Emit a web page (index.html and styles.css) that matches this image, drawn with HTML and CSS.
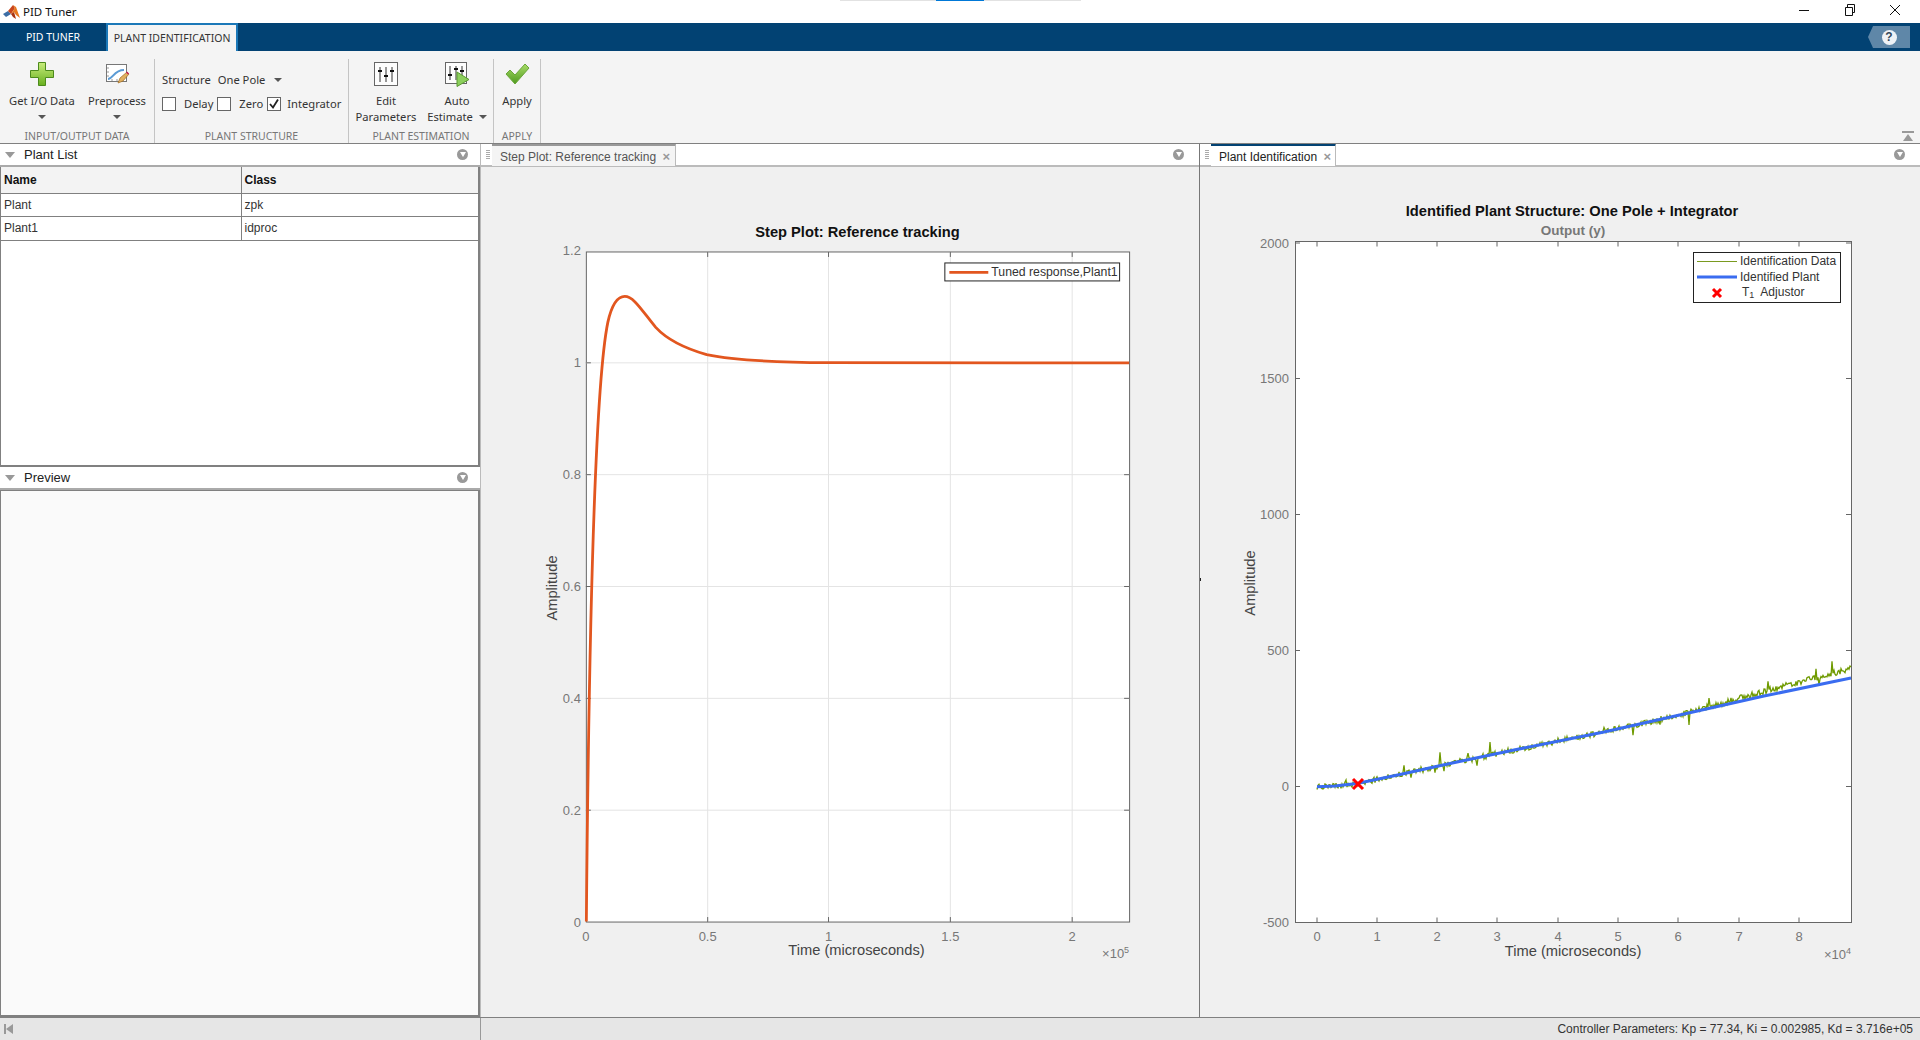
FILE: index.html
```html
<!DOCTYPE html>
<html lang="en">
<head>
    <meta charset="UTF-8">
    <title>PID Tuner</title>
    <link rel="stylesheet" href="styles.css">
</head>
<body>
<div class="app">
    <div class="load-strip"><span class="load-mark"></span></div>

    <div class="titlebar">
        <svg class="logo" width="18" height="16" viewBox="0 0 18 16">
            <polygon points="0,10 5,7 8,10 3,13" fill="#3c6ea5"/>
            <polygon points="5,7 10,1 12,4 8,10" fill="#c9461c"/>
            <polygon points="10,1 13,3 17,14 13,11 11,8 8,10 12,4" fill="#e8791f"/>
            <polygon points="8,10 11,8 13,15 10,13" fill="#a8320f"/>
        </svg>
        <span class="title-text">PID Tuner</span>
        <div class="win-controls">
            <span class="win-btn"><svg width="12" height="12" viewBox="0 0 12 12"><path d="M1 6.5h10" stroke="#111" fill="none"/></svg></span>
            <span class="win-btn"><svg width="12" height="12" viewBox="0 0 12 12"><path d="M1.5 3.5h7v8h-7zM3.5 3.5v-3h7v8h-2" stroke="#111" fill="none"/></svg></span>
            <span class="win-btn"><svg width="12" height="12" viewBox="0 0 12 12"><path d="M1 1l10 10M11 1l-10 10" stroke="#111" fill="none"/></svg></span>
        </div>
    </div>

    <div class="tabstrip">
        <div class="tab">PID TUNER</div>
        <div class="tab tab-active">PLANT IDENTIFICATION</div>
        <div class="help">
            <span class="help-ball">?</span>
        </div>
    </div>

    <div class="ribbon">
        <div class="section sec-io">
            <div class="sec-body">
                <div class="rb-btn btn-getio">
                    <svg class="rb-icon" width="26" height="26" viewBox="0 0 26 26">
                        <defs>
                            <linearGradient id="plus-fill" x1="0" y1="0" x2="0" y2="1">
                                <stop offset="0" stop-color="#c8ec7c"/>
                                <stop offset="1" stop-color="#68b01e"/>
                            </linearGradient>
                            <linearGradient id="check-fill" x1="0" y1="0" x2="0" y2="1">
                                <stop offset="0" stop-color="#a8dc68"/>
                                <stop offset="1" stop-color="#4f9a1e"/>
                            </linearGradient>
                        </defs>
                        <path d="M9.5 1.5h7v8h8v7h-8v8h-7v-8h-8v-7h8z" fill="url(#plus-fill)" stroke="#4c8a1c"/>
                    </svg>
                    <span class="rb-label">Get I/O Data</span>
                    <span class="arrow"></span>
                </div>
                <div class="rb-btn btn-pre">
                    <svg class="rb-icon" width="26" height="26" viewBox="0 0 26 26">
                        <rect x="2.5" y="3.5" width="20" height="17" fill="#fff" stroke="#777"/>
                        <path d="M3 7h2M3 11h2M3 15h2M8 20v-2M13 20v-2M18 20v-2" stroke="#999"/>
                        <path d="M4 18c5 0 6-9 16-9" fill="none" stroke="#5b9bd5" stroke-width="2"/>
                        <path d="M14 22l2-5 7-6 2 2-6 7z" fill="#e0b060" stroke="#a06a20" stroke-width=".7"/>
                        <path d="M22 11.500l1-1 2 2-1 1z" fill="#c2185b"/>
                    </svg>
                    <span class="rb-label">Preprocess</span>
                    <span class="arrow"></span>
                </div>
            </div>
            <div class="sec-label">INPUT/OUTPUT DATA</div>
        </div>

        <div class="section sec-struct">
            <div class="sec-body struct-body">
                <div class="struct-row">
                    <span class="struct-name">Structure</span>
                    <span class="struct-value">One Pole</span>
                    <span class="arrow"></span>
                </div>
                <div class="struct-row">
                    <span class="check"></span><span class="check-label">Delay</span>
                    <span class="check"></span><span class="check-label">Zero</span>
                    <span class="check">
                        <svg width="12" height="12" viewBox="0 0 12 12"><path d="M2 6l3 3.500 5-8" fill="none" stroke="#222" stroke-width="1.800"/></svg>
                    </span><span class="check-label">Integrator</span>
                </div>
            </div>
            <div class="sec-label">PLANT STRUCTURE</div>
        </div>

        <div class="section sec-est">
            <div class="sec-body">
                <div class="rb-btn btn-edit">
                    <svg class="rb-icon" width="26" height="26" viewBox="0 0 26 26">
                        <rect x="1.500" y="1.500" width="23" height="23" fill="#fdfdfd" stroke="#666"/>
                        <path d="M7 6v15M13 6v15M19 6v15" stroke="#333"/>
                        <path d="M5 10h4M11 15h4M17 10h4" stroke="#111" stroke-width="2"/>
                    </svg>
                    <span class="rb-label">Edit</span>
                    <span class="rb-label">Parameters</span>
                </div>
                <div class="rb-btn btn-auto">
                    <svg class="rb-icon" width="28" height="26" viewBox="0 0 28 26">
                        <rect x="2.500" y="1.500" width="21" height="21" fill="#fdfdfd" stroke="#666"/>
                        <path d="M7 5v14M13 5v14M19 5v14" stroke="#333"/>
                        <path d="M5 14h4M11 8h4M17 10h4" stroke="#111" stroke-width="2"/>
                        <path d="M14 11l12 7.500-12 7z" fill="#8ccf5c" stroke="#5a9a30"/>
                    </svg>
                    <span class="rb-label">Auto</span>
                    <span class="rb-label">Estimate <span class="arrow arrow-inline"></span></span>
                </div>
            </div>
            <div class="sec-label">PLANT ESTIMATION</div>
        </div>

        <div class="section sec-apply">
            <div class="sec-body">
                <div class="rb-btn btn-apply">
                    <svg class="rb-icon" width="26" height="26" viewBox="0 0 26 26">
                        <path d="M2 13l4-4 5 5L21 3l4 4-14 16z" fill="url(#check-fill)" stroke="#6aa63a"/>
                    </svg>
                    <span class="rb-label">Apply</span>
                </div>
            </div>
            <div class="sec-label">APPLY</div>
        </div>

        <div class="collapse-ribbon"></div>
    </div>

    <div class="workspace">
        <div class="sidebar">
            <div class="panel-head">
                <span class="tri-down"></span>
                <span class="panel-title">Plant List</span>
                <span class="panel-menu"></span>
            </div>
            <div class="plant-list">
                <table class="plant-table">
                    <tr><th>Name</th><th>Class</th></tr>
                    <tr><td>Plant</td><td>zpk</td></tr>
                    <tr><td>Plant1</td><td>idproc</td></tr>
                </table>
            </div>
            <div class="panel-head">
                <span class="tri-down"></span>
                <span class="panel-title">Preview</span>
                <span class="panel-menu"></span>
            </div>
            <div class="preview-body"></div>
        </div>

        <div class="doc doc-step">
            <div class="doc-head">
                <span class="grip"></span>
                <div class="doc-tab">Step Plot: Reference tracking <span class="doc-close">×</span></div>
                <span class="panel-menu"></span>
            </div>
            <svg class="plot" viewBox="481 167 719 850">
                <rect class="axes-box" x="586.500" y="251.500" width="544" height="671"/>
                <path class="grid" d="M708 252V922M829 252V922M951 252V922M1073 252V922M586 362.500H1130M586 474.500H1130M586 586.500H1130M586 698.500H1130M586 810.500H1130"/>
                <path class="ticks" d="M708 251.500v5M829 251.500v5M951 251.500v5M1073 251.500v5M708 922.500v-5M829 922.500v-5M951 922.500v-5M1073 922.500v-5M586 362.500h5M586 474.500h5M586 586.500h5M586 698.500h5M586 810.500h5M1130 362.500h-5M1130 474.500h-5M1130 586.500h-5M1130 698.500h-5M1130 810.500h-5"/>
                <path class="step-curve" d="M586.500 922C589 640 595 385 608 322C612 304 618 296 625 296C634 296 642 310 656 327C668 340 685 348 707 354.300C730 359 760 362 829 362.400L1130 362.500"/>
                <text class="tick-y" x="581" y="255">1.2</text>
                <text class="tick-y" x="581" y="367">1</text>
                <text class="tick-y" x="581" y="479">0.8</text>
                <text class="tick-y" x="581" y="591">0.6</text>
                <text class="tick-y" x="581" y="703">0.4</text>
                <text class="tick-y" x="581" y="815">0.2</text>
                <text class="tick-y" x="581" y="927">0</text>
                <text class="tick-x" x="586" y="941">0</text>
                <text class="tick-x" x="708" y="941">0.5</text>
                <text class="tick-x" x="829" y="941">1</text>
                <text class="tick-x" x="951" y="941">1.5</text>
                <text class="tick-x" x="1073" y="941">2</text>
                <text class="plot-title" x="858" y="237">Step Plot: Reference tracking</text>
                <text class="axis-label" x="857" y="956">Time (microseconds)</text>
                <text class="axis-label" transform="translate(557 588) rotate(-90)">Amplitude</text>
                <text class="exponent" x="1130" y="959">×10<tspan class="sup" dy="-5">5</tspan></text>
                <rect class="legend-box" x="945.500" y="262.500" width="175" height="18"/>
                <path class="step-curve" d="M950 272H989"/>
                <text class="legend-text" x="992" y="276">Tuned response,Plant1</text>
            </svg>
        </div>

        <div class="doc doc-id">
            <div class="doc-head">
                <span class="grip"></span>
                <div class="doc-tab doc-tab-active">Plant Identification <span class="doc-close">×</span></div>
                <span class="panel-menu"></span>
            </div>
            <svg class="plot" viewBox="1200 167 720 850">
                <path class="mark" d="M1200.500 578v3"/>
                <rect class="axes-box" x="1295.500" y="241.500" width="556" height="681"/>
                <path class="ticks" d="M1317 241.500v5M1377 241.500v5M1437 241.500v5M1497 241.500v5M1558 241.500v5M1618 241.500v5M1678 241.500v5M1739 241.500v5M1799 241.500v5M1317 922.500v-5M1377 922.500v-5M1437 922.500v-5M1497 922.500v-5M1558 922.500v-5M1618 922.500v-5M1678 922.500v-5M1739 922.500v-5M1799 922.500v-5M1295 243h5M1295 378.500h5M1295 514.500h5M1295 650.500h5M1295 786.500h5M1851 243h-5M1851 378.500h-5M1851 514.500h-5M1851 650.500h-5M1851 786.500h-5"/>
                <polyline id="id-data" class="id-data"/>
                <polyline id="id-plant" class="id-plant"/>
                <path class="adjustor" d="M1353 779l10 10M1363 779l-10 10"/>
                <text class="tick-y" x="1289" y="248">2000</text>
                <text class="tick-y" x="1289" y="383">1500</text>
                <text class="tick-y" x="1289" y="519">1000</text>
                <text class="tick-y" x="1289" y="655">500</text>
                <text class="tick-y" x="1289" y="791">0</text>
                <text class="tick-y" x="1289" y="927">-500</text>
                <text class="tick-x" x="1317" y="941">0</text>
                <text class="tick-x" x="1377" y="941">1</text>
                <text class="tick-x" x="1437" y="941">2</text>
                <text class="tick-x" x="1497" y="941">3</text>
                <text class="tick-x" x="1558" y="941">4</text>
                <text class="tick-x" x="1618" y="941">5</text>
                <text class="tick-x" x="1678" y="941">6</text>
                <text class="tick-x" x="1739" y="941">7</text>
                <text class="tick-x" x="1799" y="941">8</text>
                <text class="plot-title" x="1572" y="216">Identified Plant Structure: One Pole + Integrator</text>
                <text class="output-label" x="1573" y="235">Output (y)</text>
                <text class="axis-label" x="1573" y="956">Time (microseconds)</text>
                <text class="axis-label" transform="translate(1255 583) rotate(-90)">Amplitude</text>
                <text class="exponent" x="1851" y="959">×10<tspan class="sup" dy="-5">4</tspan></text>
                <rect class="legend-box" x="1693.500" y="252.500" width="147" height="50"/>
                <path class="id-key" d="M1697 261.500H1737"/>
                <path class="id-plant" d="M1697 277H1737"/>
                <path class="adjustor" d="M1713 289l8 8M1721 289l-8 8"/>
                <text class="legend-text legend-small" x="1740" y="265">Identification Data</text>
                <text class="legend-text legend-small" x="1740" y="281">Identified Plant</text>
                <text class="legend-text legend-small" x="1742" y="296">T<tspan class="sub" dy="2">1</tspan><tspan dx="6" dy="-2">Adjustor</tspan></text>
            </svg>
        </div>
    </div>

    <div class="statusbar">
        <div class="status-left"><span class="first-page"></span></div>
        <div class="status-right">Controller Parameters: Kp = 77.34, Ki = 0.002985, Kd = 3.716e+05</div>
    </div>
</div>
<script src="plots.js"></script>
</body>
</html>
```

FILE: styles.css
```css
* {
    box-sizing: border-box;
}
body {
    margin: 0;
    font-family: "Liberation Sans", Arial, sans-serif;
    background-color: #f0f0f0;
    color: #222;
}
.app {
    position: relative;
    width: 1920px;
    height: 1040px;
    display: flex;
    flex-direction: column;
    overflow: hidden;
}
.load-strip {
    position: absolute;
    left: 840px;
    top: 0;
    width: 241px;
    height: 1px;
    background-color: #e2e2e2;
}
.load-mark {
    position: absolute;
    left: 96px;
    top: 0;
    width: 48px;
    height: 1px;
    background-color: #0078d7;
}

/* title bar */
.titlebar {
    height: 23px;
    background-color: #fff;
    display: flex;
    align-items: center;
    padding-left: 3px;
}
.title-text {
    margin-left: 2px;
    font-family: "Noto Sans", sans-serif;
    font-size: 11.5px;
    color: #111;
}
.win-controls {
    margin-left: auto;
    margin-bottom: 3px;
    padding-right: 2px;
    display: flex;
}
.win-btn {
    width: 45.5px;
    display: flex;
    justify-content: center;
}

/* tabs */
.tabstrip {
    height: 28px;
    background-color: #024273;
    display: flex;
    align-items: flex-end;
    font-family: "Noto Sans", sans-serif;
    font-size: 10.5px;
}
.tab {
    height: 28px;
    width: 106px;
    color: #fff;
    display: flex;
    align-items: center;
    justify-content: center;
}
.tab-active {
    width: 132px;
    color: #333;
    background-color: #f4f4f4;
    border: 2px solid #1b78b8;
    border-bottom: none;
}
.help {
    margin-left: auto;
    margin-right: 10px;
    margin-bottom: 3px;
    width: 42px;
    height: 22px;
    background-color: #5f87a8;
    clip-path: polygon(12% 0, 100% 0, 100% 100%, 12% 100%, 0 50%);
    display: flex;
    align-items: center;
    justify-content: center;
}
.help-ball {
    width: 15px;
    height: 15px;
    border-radius: 50%;
    background-color: #eef2f6;
    color: #33475a;
    font-family: "Liberation Sans", sans-serif;
    font-weight: bold;
    font-size: 12px;
    text-align: center;
    line-height: 15px;
}

/* ribbon */
.ribbon {
    position: relative;
    height: 93px;
    background-color: #f4f4f4;
    display: flex;
    padding-top: 8px;
    font-family: "Noto Sans", sans-serif;
    font-size: 11.2px;
    color: #333;
    border-bottom: 1px solid #808080;
}
.section {
    display: flex;
    flex-direction: column;
    border-right: 1px solid #c4c4c4;
}
.sec-io { width: 155px; }
.sec-struct { width: 194px; }
.sec-est { width: 145px; }
.sec-apply { width: 47px; }
.sec-body {
    flex: 1;
    display: flex;
}
.sec-label {
    height: 15px;
    line-height: 16px;
    text-align: center;
    font-size: 10.5px;
    color: #777;
}
.rb-btn {
    display: flex;
    flex-direction: column;
    align-items: center;
    line-height: 16px;
}
.rb-icon {
    height: 26px;
    margin: 2px 0 6px;
    flex-shrink: 0;
}
.rb-label {
    white-space: nowrap;
}
.btn-getio { width: 84px; }
.btn-pre { width: 66px; }
.btn-edit { width: 74px; }
.btn-auto { width: 68px; }
.btn-apply { width: 48px; }
.arrow {
    display: block;
    width: 0;
    height: 0;
    margin-top: 6px;
    border-left: 4px solid transparent;
    border-right: 4px solid transparent;
    border-top: 4px solid #555;
}
.arrow-inline {
    display: inline-block;
    margin: 0 0 2px 3px;
}
.struct-body {
    flex-direction: column;
    padding: 12px 0 0 7px;
}
.struct-row {
    height: 17px;
    display: flex;
    align-items: center;
}
.struct-row + .struct-row {
    margin-top: 7px;
}
.struct-name {
    margin-right: 7px;
}
.struct-value {
    margin-right: 9px;
}
.struct-row .arrow {
    margin-top: 0;
}
.check {
    width: 14px;
    height: 14px;
    background-color: #fff;
    border: 1px solid #666;
    display: flex;
    align-items: center;
    justify-content: center;
    flex-shrink: 0;
}
.check-label {
    margin: 0 4px 0 8px;
}
.check-label:last-child {
    margin-left: 6px;
}
.collapse-ribbon {
    position: absolute;
    right: 6px;
    top: 80px;
    width: 12px;
    height: 10px;
    border-top: 2px solid #999;
}
.collapse-ribbon::after {
    content: "";
    position: absolute;
    left: 1px;
    top: 1px;
    border-left: 5px solid transparent;
    border-right: 5px solid transparent;
    border-bottom: 7px solid #999;
}

/* main area */
.workspace {
    flex: 1;
    display: flex;
    min-height: 0;
}
.sidebar {
    width: 481px;
    display: flex;
    flex-direction: column;
    border-right: 1px solid #bbb;
}
.panel-head {
    height: 23px;
    flex-shrink: 0;
    background-color: #fff;
    display: flex;
    align-items: center;
    padding: 0 12px 0 5px;
    border-bottom: 2px solid #aaa;
}
.panel-title {
    margin-left: 9px;
    font-size: 13px;
    color: #222;
}
.tri-down {
    width: 0;
    height: 0;
    border-left: 5px solid transparent;
    border-right: 5px solid transparent;
    border-top: 6px solid #999;
}
.panel-menu {
    position: relative;
    margin-left: auto;
    width: 11px;
    height: 11px;
    border-radius: 50%;
    background-color: #999;
}
.panel-menu::after {
    content: "";
    position: absolute;
    left: 2.500px;
    top: 3px;
    border-left: 3px solid transparent;
    border-right: 3px solid transparent;
    border-top: 5px solid #fff;
}
.plant-list {
    height: 300px;
    background-color: #fff;
    border: 2px solid #808080;
    border-top: none;
    border-left-width: 1px;
    flex-shrink: 0;
}
.plant-table {
    width: 100%;
    border-collapse: collapse;
    font-size: 12px;
    color: #333;
}
.plant-table th {
    height: 26px;
    background-color: #f3f3f3;
    text-align: left;
    color: #111;
    padding: 0 3px;
    border-bottom: 1px solid #808080;
}
.plant-table td {
    height: 23px;
    padding: 0 3px;
    border-bottom: 1px solid #808080;
}
.plant-table tr:last-child td {
    height: 24px;
}
.plant-table tr > :first-child {
    width: 240px;
    border-right: 1px solid #808080;
}
.preview-body {
    flex: 1;
    background-color: #fafafa;
    border: 2px solid #808080;
    border-left-width: 1px;
    border-top-width: 1px;
}
.doc {
    display: flex;
    flex-direction: column;
    border-right: 1px solid #777;
}
.doc-step { width: 719px; }
.doc-id { width: 720px; border-right: none; }
.doc-head {
    height: 23px;
    flex-shrink: 0;
    background-color: #fff;
    display: flex;
    padding-right: 15px;
    align-items: center;
    border-bottom: 2px solid #bbb;
    font-size: 12px;
}
.grip {
    width: 9px;
    height: 10px;
    margin-left: 2px;
    background-image: repeating-linear-gradient(#aaa 0 1px, transparent 1px 2px);
    background-size: 4px 100%;
    background-repeat: no-repeat;
    background-position: center;
}
.doc-tab {
    height: 23px;
    width: 184px;
    padding: 3px 0 0 8px;
    background-color: #f4f4f4;
    border-top: 3px solid #999;
    border-right: 1px solid #bbb;
    color: #555;
    white-space: nowrap;
}
.doc-tab-active {
    width: 125px;
    background-color: #fff;
    border-top-color: #024273;
    color: #222;
}
.doc-close {
    margin-left: 3px;
    font-weight: bold;
    font-size: 13px;
    color: #999;
}
.plot {
    flex: 1;
    display: block;
    width: 100%;
    min-height: 0;
    background-color: #f0f0f0;
}
.axes-box {
    fill: #fff;
    stroke: #666;
}
.mark {
    stroke: #222;
    fill: none;
}
.grid {
    stroke: #e4e4e4;
    fill: none;
}
.ticks {
    stroke: #666;
    fill: none;
}
.step-curve {
    fill: none;
    stroke: #e2561f;
    stroke-width: 2.800;
}
.id-data {
    fill: none;
    stroke: #6f9a00;
    stroke-width: 1.300;
}
.id-key {
    fill: none;
    stroke: #7a9a20;
    stroke-width: 1;
}
.id-plant {
    fill: none;
    stroke: #3a6cf0;
    stroke-width: 3;
}
.adjustor {
    fill: none;
    stroke: #ff0000;
    stroke-width: 3;
}
.tick-y {
    font-size: 13px;
    fill: #777;
    text-anchor: end;
}
.tick-x {
    font-size: 13px;
    fill: #777;
    text-anchor: middle;
}
.plot-title {
    font-size: 14.700px;
    font-weight: bold;
    fill: #111;
    text-anchor: middle;
}
.output-label {
    font-size: 13.500px;
    font-weight: bold;
    fill: #777;
    text-anchor: middle;
}
.axis-label {
    font-size: 14.700px;
    fill: #444;
    text-anchor: middle;
}
.exponent {
    font-size: 13px;
    fill: #777;
    text-anchor: end;
}
.sup, .sub {
    font-size: 9px;
}
.legend-box {
    fill: #fff;
    stroke: #222;
}
.legend-text {
    font-size: 12.300px;
    fill: #333;
}
.legend-small {
    font-size: 12px;
}

/* status bar */
.statusbar {
    height: 23px;
    flex-shrink: 0;
    display: flex;
    background-color: #e6e6e6;
    font-size: 12px;
    color: #333;
    border-top: 1px solid #808080;
}
.status-left {
    width: 481px;
    padding: 6px 0 0 4px;
    border-right: 1px solid #999;
}
.first-page {
    display: block;
    position: relative;
    width: 9px;
    height: 10px;
    border-left: 2px solid #999;
}
.first-page::after {
    content: "";
    position: absolute;
    left: 0;
    top: 0;
    border-top: 5px solid transparent;
    border-bottom: 5px solid transparent;
    border-right: 7px solid #999;
}
.status-right {
    flex: 1;
    text-align: right;
    padding: 4px 7px 0 0;
}
```

FILE: plots.js
```js
// identified plant line, pixel coords inside the svg
const plant = [
    [1317, 786.7], [1335, 786], [1357, 783.5], [1400, 774.5], [1443, 765],
    [1514, 750], [1604, 732], [1693, 712], [1764, 696], [1851, 678]
];

// hand picked spikes of the measured data [x, dy]
const spikes = [
    [1346, -5], [1404, -9], [1411, 4], [1435, 5], [1440, -11], [1444, 5], [1468, -9], [1477, 5],
    [1490, -12], [1590, 4], [1604, -4], [1633, 10], [1660, 4], [1689, 11], [1709, -10],
    [1750, 4], [1768, -6], [1790, -4], [1816, -11], [1819, 6], [1832, -14]
];

function plantY(x) {
    for (let i = 1; i < plant.length; i++) {
        if (x <= plant[i][0]) {
            const a = plant[i - 1], b = plant[i];
            return a[1] + (b[1] - a[1]) * (x - a[0]) / (b[0] - a[0]);
        }
    }
    return plant[plant.length - 1][1];
}

// small seeded generator so the noise is the same on every load
let seed = 12345;
function rand() {
    seed = (seed * 1103 + 12345) % 65536;
    return seed / 65536;
}

let pts = [];
for (let x = 1317; x <= 1851; x++) {
    let drift = x > 1680 ? (x - 1680) * 0.055 : 0;
    let y = plantY(x) - drift + (rand() - 0.5) * 6;
    for (const s of spikes) {
        if (s[0] === x) y += s[1];
    }
    pts.push(x + ',' + y.toFixed(1));
}
document.getElementById('id-data').setAttribute('points', pts.join(' '));
document.getElementById('id-plant').setAttribute('points', plant.map(p => p.join(',')).join(' '));
```
